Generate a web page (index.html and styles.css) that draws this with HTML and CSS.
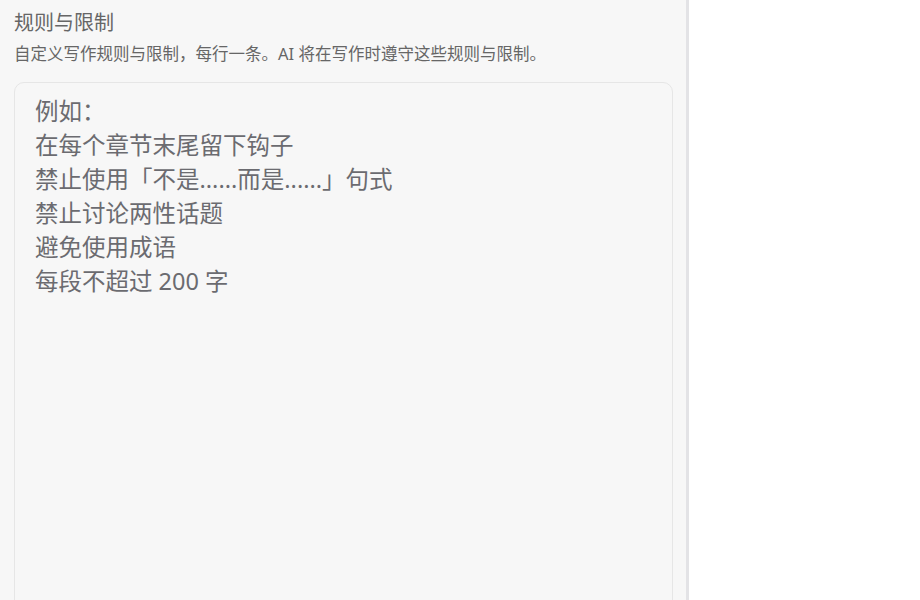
FILE: index.html
```html
<!DOCTYPE html>
<html lang="zh-CN">
<head>
    <meta charset="UTF-8">
    <meta name="viewport" content="width=device-width, initial-scale=1.0">
    <title>规则与限制</title>
    <link rel="stylesheet" href="styles.css">
</head>
<body>
    <div class="layout">
        <div class="side-panel">
            <h2 class="section-title">规则与限制</h2>
            <p class="section-desc">自定义写作规则与限制，每行一条。AI 将在写作时遵守这些规则与限制。</p>
            <textarea class="rules-input" placeholder="例如：&#10;在每个章节末尾留下钩子&#10;禁止使用「不是......而是......」句式&#10;禁止讨论两性话题&#10;避免使用成语&#10;每段不超过 200 字"></textarea>
        </div>
        <div class="main-area"></div>
    </div>
</body>
</html>
```

FILE: styles.css
```css
body {
    margin: 0;
    padding: 0;
    font-family: "Noto Sans", "Noto Sans CJK SC", sans-serif;
    color: #666;
    background-color: #fff;
    overflow: hidden;
}

.layout {
    display: flex;
    height: 600px;
}

.side-panel {
    width: 689px;
    flex-shrink: 0;
    background-color: #f7f7f7;
    border-right: 3px solid #e3e3e6;
    padding: 10px 13px 0 14px;
    box-sizing: border-box;
    overflow: hidden;
}

.section-title {
    margin: 0;
    font-size: 20px;
    font-weight: 400;
    line-height: 26px;
    color: #666;
}

.section-desc {
    margin: 7px 0 0 0;
    font-size: 16.5px;
    line-height: 22px;
    color: #666;
}

.rules-input {
    display: block;
    width: 100%;
    height: 560px;
    margin-top: 17px;
    box-sizing: border-box;
    padding: 11px 20px;
    border: 1px solid #e6e6e6;
    border-radius: 10px;
    background-color: #f7f7f7;
    font-family: inherit;
    font-size: 23.5px;
    line-height: 34px;
    color: #666;
    resize: none;
    outline: none;
}

.rules-input::placeholder {
    color: #6b6b70;
    opacity: 1;
}

.main-area {
    flex: 1;
    background-color: #fff;
}
```
